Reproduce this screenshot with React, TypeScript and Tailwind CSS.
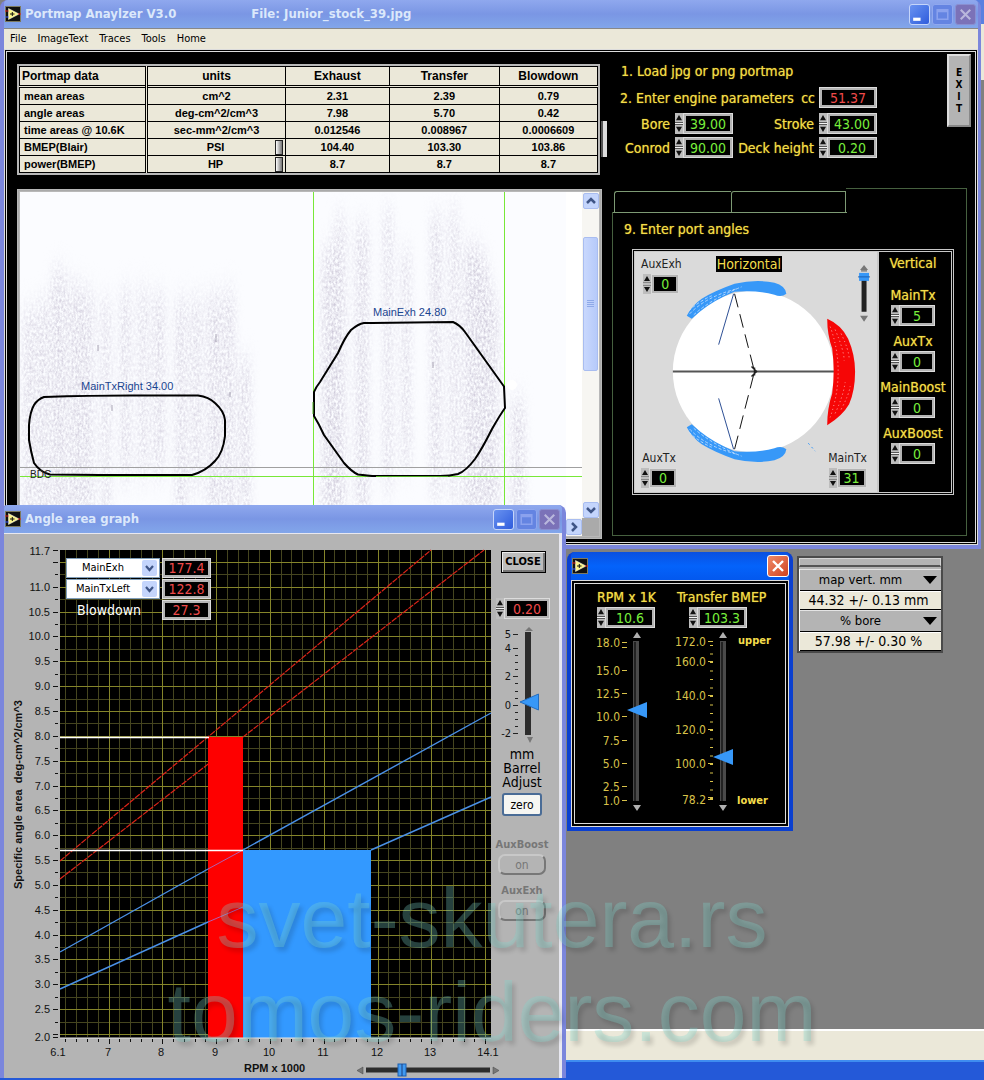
import React, { useId } from 'react';

const ui = "font-['DejaVu_Sans_Condensed','DejaVu_Sans',sans-serif]";
const dialog = "font-['Liberation_Sans',sans-serif]";

const portRows = [
  { name: 'mean areas', unit: 'cm^2', values: ['2.31', '2.39', '0.79'] },
  { name: 'angle areas', unit: 'deg-cm^2/cm^3', values: ['7.98', '5.70', '0.42'] },
  { name: 'time areas @ 10.6K', unit: 'sec-mm^2/cm^3', values: ['0.012546', '0.008967', '0.0006609'] },
  { name: 'BMEP(Blair)', unit: 'PSI', ring: true, values: ['104.40', '103.30', '103.86'] },
  { name: 'power(BMEP)', unit: 'HP', ring: true, values: ['8.7', '8.7', '8.7'] },
];

function AppIcon() {
  return (
    <svg width="16" height="16" viewBox="0 0 16 16" className="shrink-0">
      <rect width="16" height="16" fill="#111" />
      <rect x="0.500" y="0.500" width="15" height="15" fill="none" stroke="#e8e4b0" strokeDasharray="1 1" />
      <path d="M3.500 2.500L14 8L3.500 13.500Z" fill="#fbf48a" stroke="#fff" strokeWidth="0.500" />
      <path d="M5 8h4.500M7.300 6v4" stroke="#111" />
      <path d="M0 11h3.500" stroke="#3b5bff" />
      <path d="M0 5h3.500M13 8h3" stroke="#e02020" />
    </svg>
  );
}

function TitleBar({ title, file }: { title: string; file?: string }) {
  return (
    <header className="flex h-7 items-center gap-1 rounded-t bg-gradient-to-b from-[#8fa8ee] via-[#7a96e4] to-[#82a6ea] pl-px pr-0.5">
      <AppIcon />
      <h1 className={`${ui} text-[13px] font-bold leading-4 text-[#dbe8fb]`}>{title}</h1>
      {file && <span className={`${ui} ml-[71px] text-[13px] font-bold leading-4 text-[#dbe8fb]`}>{file}</span>}
      <div className="ml-auto flex gap-0.5">
        <button aria-label="Minimize" className="h-[21px] w-[21px] rounded-[3px] border border-[#c5d5fa] bg-gradient-to-br from-[#6a92f0] to-[#2f5bdc]">
          <svg viewBox="0 0 18 18"><path d="M3 13.500h7" stroke="#fff" strokeWidth="3" /></svg>
        </button>
        <button aria-label="Maximize" className="h-[21px] w-[21px] rounded-[3px] border border-[#90a8ee] bg-[#6484e2]">
          <svg viewBox="0 0 18 18"><path d="M4 4.500h10v9H4zM4 6h10" fill="none" stroke="#8ba2ee" strokeWidth="1.500" /></svg>
        </button>
        <button aria-label="Close window" className="h-[21px] w-[21px] rounded-[3px] border border-[#8a8fd0] bg-[#7b72b8]">
          <svg viewBox="0 0 18 18"><path d="M4.500 4.500l9 9M13.500 4.500l-9 9" stroke="#b9b7dc" strokeWidth="2" /></svg>
        </button>
      </div>
    </header>
  );
}

function Arrows() {
  return (
    <svg viewBox="0 0 8 20" className="h-full w-2 shrink-0 bg-[#bdbdbd]" preserveAspectRatio="none">
      <path d="M4 2L7 7H1ZM4 18L7 13H1Z" fill="#111" />
      <path d="M0 9h8M0 11h8" stroke="#555" />
      <path d="M0 10h8" stroke="#f4f4f4" />
    </svg>
  );
}

type NumBoxProps = { value: string; label?: string; id?: string; red?: boolean; arrows?: boolean; className?: string };

function NumBox({ value, label, id, red, arrows = true, className = 'h-[21px] w-[58px]' }: NumBoxProps) {
  return (
    <span className={`flex shrink-0 ${className}`}>
      {arrows && <Arrows />}
      <input
        id={id}
        aria-label={label}
        defaultValue={value}
        readOnly={!arrows}
        className={`${ui} min-w-0 flex-1 border-[3px] border-[#b4b4b4] bg-black text-center text-[14px] leading-4 outline-1 -outline-offset-1 outline-[#dcdcdc] ${red ? 'text-[#f04a4a]' : 'text-[#78ee3c]'}`}
      />
    </span>
  );
}

function Field({ label, value, labelClass, boxClass }: { label: string; value: string; labelClass: string; boxClass: string }) {
  const id = useId();
  return (
    <div className="flex flex-col items-center gap-[2px]">
      <label htmlFor={id} className={`${ui} ${labelClass}`}>{label}</label>
      <NumBox id={id} value={value} className={boxClass} />
    </div>
  );
}

function PortTable() {
  return (
    <div className="mt-3 border-2 border-[#b8b8b8] bg-[#b8b8b8]">
      <table className={`${dialog} w-full table-fixed border-collapse border border-black bg-[#ebe8d9] text-center text-[12px] font-bold leading-4 text-black`}>
        <colgroup>
          <col className="w-[22%]" /><col className="w-[24%]" /><col className="w-[18%]" /><col className="w-[19%]" /><col className="w-[17%]" />
        </colgroup>
        <thead>
          <tr className="h-5 border-b-[3px] border-double border-black">
            {['Portmap data', 'units', 'Exhaust', 'Transfer', 'Blowdown'].map((h, i) => (
              <th key={h} className={i === 0 ? 'border-r-[3px] border-double border-black pl-0.5 text-left' : 'border-r border-black'}>{h}</th>
            ))}
          </tr>
        </thead>
        <tbody className="text-[11px]">
          {portRows.map(r => (
            <tr key={r.name} className="h-[17px] border-b border-black">
              <th className="border-r-[3px] border-double border-black pl-1 text-left">{r.name}</th>
              <td className="border-r border-black">
                {r.ring ? (
                  <div className="flex items-center">
                    <select aria-label={`${r.name} unit`} className="h-4 min-w-0 flex-1 appearance-none pl-2 text-center [text-align-last:center]">
                      <option>{r.unit}</option>
                    </select>
                    <span className="mr-0.5 h-[15px] w-2 border border-[#222] bg-gradient-to-r from-white to-[#777]" />
                  </div>
                ) : r.unit}
              </td>
              {r.values.map((v, i) => <td key={i} className="border-r border-black">{v}</td>)}
            </tr>
          ))}
        </tbody>
      </table>
    </div>
  );
}

const smudges = [
  [24, 310, 10, 208], [38, 302, 10, 216], [52, 272, 14, 246], [70, 286, 12, 232], [84, 292, 9, 226],
  [102, 300, 8, 218], [121, 290, 9, 190], [139, 288, 8, 190], [154, 294, 10, 180], [176, 300, 10, 218],
  [192, 298, 9, 190], [208, 296, 12, 222], [224, 292, 10, 226], [240, 360, 10, 158],
  [322, 250, 14, 268], [335, 218, 10, 300], [356, 225, 12, 290], [384, 210, 8, 280], [402, 250, 8, 220],
  [431, 216, 10, 280], [450, 210, 8, 290], [464, 245, 12, 273], [477, 265, 12, 253], [490, 300, 8, 218], [512, 400, 12, 118],
  [474, 250, 10, 90], [484, 290, 9, 90], [490, 440, 9, 78],
];

function ArrowButton({ label, d }: { label: string; d: string }) {
  return (
    <button aria-label={label} className="h-4 w-4 shrink-0 rounded-[2px] border border-[#a9bdf0] bg-[#c4d5fc]">
      <svg viewBox="0 0 14 14"><path d={d} fill="none" stroke="#3f5586" strokeWidth="2.500" /></svg>
    </button>
  );
}

function PortImage() {
  return (
    <div className="mt-3.5 border-[3px] border-double border-[#b8b8b8] bg-[#aaa]">
      <div className="flex">
        <svg viewBox="20 192 562 326" className="min-w-0 flex-1 bg-[#fbfcff]">
          <defs>
            <filter id="soft" x="-20%" y="-20%" width="140%" height="140%"><feGaussianBlur stdDeviation="5 14" /></filter>
            <filter id="grain" x="0" y="0" width="100%" height="100%">
              <feTurbulence type="fractalNoise" baseFrequency="0.5 0.3" numOctaves="3" seed="4" />
              <feColorMatrix values="0 0 0 0 0.62  0 0 0 0 0.59  0 0 0 0 0.7  0 0 0 2 -0.62" />
            </filter>
            <mask id="streaks">
              <g filter="url(#soft)" fill="#fff">
                {smudges.map(([x, y, w, h], i) => <rect key={i} x={x} y={y} width={w} height={h} />)}
              </g>
            </mask>
          </defs>
          <rect x="20" y="192" width="562" height="326" filter="url(#grain)" mask="url(#streaks)" />
          <path d="M566 192h16v326h-16z" fill="#fff" />
          <circle cx="512" cy="385" r="5" fill="#fff" />
          <path d="M98 345v6M216 334v8M230 392v5M112 405v6M433 362v6" stroke="#8a8398" strokeOpacity="0.7" />
          <path d="M20 467.500H582" stroke="#a0a0a0" />
          <path d="M20 476.500H582M313.500 192V518M504.500 192V518" stroke="#78e838" />
          <path
            d="M44 397Q90 395.500 130 395.500H198Q209 397 215 403Q224 411 225 420V436Q223 453 215 461Q206 471 192 475H100L50 474.500Q40 472 34 463Q31 452 29 440V425Q30 412 34 405Q38 399 44 397Z"
            fill="none" stroke="#000" strokeWidth="2"
          />
          <path
            d="M314 392Q316 387 320 382L338 353Q345 337 351 330Q358 324 364 323H372L453 322Q460 325 465 332L504 386.500L505 408Q500 415 492 429Q482 449 475 459Q466 471 458 474Q450 476 440 476H372L358 474.500Q352 472 344 463L324 435Q319 424 314 416Z"
            fill="none" stroke="#000" strokeWidth="2"
          />
          <path d="M376 476.500H448M313 402v12" stroke="#4fae22" />
          <g className={dialog} fontSize="11" fill="#1a4590">
            <text x="81" y="390">MainTxRight 34.00</text>
            <text x="373" y="316">MainExh 24.80</text>
            <text x="30" y="478" fontSize="10" fill="#222">BDC</text>
          </g>
        </svg>
        <div className="flex w-[17px] flex-col items-center bg-[#f7f6f2] pt-px">
          <ArrowButton label="Scroll up" d="M3 9l4-4l4 4" />
          <div className="mt-7 flex h-[134px] w-[15px] items-center justify-center rounded-[2px] border border-[#a9bdf0] bg-gradient-to-r from-[#c9d8fd] to-[#b6cafa]">
            <svg width="7" height="8" viewBox="0 0 7 8"><path d="M0 .5h7M0 2.500h7M0 4.500h7M0 6.500h7" stroke="#8ea9e8" /></svg>
          </div>
          <div className="mt-auto flex"><ArrowButton label="Scroll down" d="M3 5l4 4l4-4" /></div>
        </div>
      </div>
      <div className="flex h-[18px] items-center justify-end bg-[#f7f6f2]">
        <ArrowButton label="Scroll right" d="M5 3l4 4l-4 4" />
        <span className="h-full w-[17px] bg-[#aaa]" />
      </div>
    </div>
  );
}

const yellow = 'text-[14px] leading-4 text-[#f3dd4c] [text-shadow:0_0_1px_#b9a010]';

function EngineParams() {
  return (
    <section className={`${ui} ${yellow} flex w-[274px] flex-col whitespace-nowrap pt-[11px]`}>
      <p className="pl-[18px]">1. Load jpg or png portmap</p>
      <div className="mt-2 flex items-center">
        <p className="flex-1 pl-[17px]">2. Enter engine parameters</p>
        <label htmlFor="cc" className="pr-1">cc</label>
        <NumBox id="cc" value="51.37" red arrows={false} />
      </div>
      <div className="mt-[5px] grid grid-cols-[67px_58px_1fr_58px] items-center gap-x-[5px] gap-y-[3px] text-right">
        <label htmlFor="bore">Bore</label>
        <NumBox id="bore" value="39.00" />
        <label htmlFor="stroke">Stroke</label>
        <NumBox id="stroke" value="43.00" />
        <label htmlFor="conrod">Conrod</label>
        <NumBox id="conrod" value="90.00" />
        <label htmlFor="deck">Deck height</label>
        <NumBox id="deck" value="0.20" />
      </div>
    </section>
  );
}

const arc = 'M687 317Q692 307 702 300Q715 292 735 285Q757 280 775 284Q786 287 787 295Q782 299 775 296Q757 291 735 293Q715 301 700 313L692 320Z';

function TransferSide() {
  return (
    <>
      <path d={arc} fill="#3798f8" />
      <path d="M690 315Q706 298 737 290M694 316Q712 300 742 288M689 312Q700 302 712 297" fill="none" stroke="#cfe6ff" strokeDasharray="3 2" strokeWidth="0.800" />
      <path d="M734 295L719 346" stroke="#2c4f94" />
      <path d="M735 295L755 373" stroke="#111" strokeDasharray="14 7" />
    </>
  );
}

function PortDial() {
  return (
    <svg viewBox="635 253 243 241" className="col-start-1 row-start-1 h-full w-full">
      <circle cx="754" cy="373" r="81" fill="#fff" />
      <path d="M673 373H836" stroke="#555" strokeWidth="2" />
      <TransferSide />
      <g transform="matrix(1 0 0 -1 0 746)"><TransferSide /></g>
      <path d="M752 368l5 5l-5 5M755 369v8" fill="none" stroke="#222" strokeWidth="1.500" />
      <path d="M828 320Q842 326 849 340Q856 356 856 373Q856 392 850 406Q843 418 828 427Q828 410 833 395Q836 373 833 350Q828 336 828 320Z" fill="#f60606" />
      <path d="M831 328Q839 350 839 373Q839 396 831 419M836 331Q845 352 845 362M836 415Q844 398 846 384M842 335Q850 352 850 360M842 411Q850 396 851 388" fill="none" stroke="#ffb0b0" strokeDasharray="1 3" />
      <path d="M809 445l7 8" stroke="#3798f8" strokeDasharray="2 3" />
      <path d="M865 266l4 5h-8zM865 323l4-6h-8z" fill="#777" />
      <path d="M865 275V313" stroke="#222" strokeWidth="5" />
      <path d="M862 272h6" stroke="#555" />
      <path d="M860 274h10v8h-10z" fill="#3798f8" />
      <path d="M859 278h12" stroke="#1c5fb0" />
    </svg>
  );
}

function PortAngles() {
  const dark = 'text-[12px] leading-4 text-[#222]';
  return (
    <section className="mt-[30px] ml-2 mr-2">
      <div className="flex items-end" role="tablist">
        <button role="tab" aria-label="Tab 1" className="ml-0.5 h-[21px] w-[117px] rounded-tl-[3px] border-l border-t border-[#7d9a74]" />
        <button role="tab" aria-label="Tab 2" className="h-[21px] w-[115px] rounded-tl-[3px] border-x border-t border-[#7d9a74]" />
        <button role="tab" aria-label="Tab 3" aria-selected className="h-6 flex-1 border-r border-t border-[#46603f]" />
      </div>
      <div className="relative border-x border-b border-[#46603f] pb-10 pl-[19px] pr-3 pt-[9px] before:absolute before:left-0 before:top-0 before:h-px before:w-[234px] before:bg-[#7d9a74]">
        <h2 className={`${ui} ${yellow} -ml-2`}>9. Enter port angles</h2>
        <div className="mt-3 flex border-[3px] border-double border-[#c8c8c8]">
          <div className="grid min-w-0 flex-1 bg-[#dadada]">
            <PortDial />
            <div className="z-10 col-start-1 row-start-1 flex flex-col justify-between py-1 pl-1.5 pr-2.5">
              <div className="flex items-start">
                <Field label="AuxExh" value="0" labelClass={dark} boxClass="w-9 h-5" />
                <h3 className={`${ui} ml-[34px] bg-black px-px text-[14px] leading-4 text-[#f3dd4c]`}>Horizontal</h3>
              </div>
              <div className="flex justify-between">
                <Field label="AuxTx" value="0" labelClass={dark} boxClass="w-9 h-5" />
                <Field label="MainTx" value="31" labelClass={dark} boxClass="w-[38px] h-5" />
              </div>
            </div>
          </div>
          <div className="flex w-[74px] flex-col items-center gap-[7px] border-l-2 border-[#c8c8c8] bg-black pb-7 pr-1 pt-[3px]">
            <h3 className={`${ui} ${yellow} mb-[9px]`}>Vertical</h3>
            <Field label="MainTx" value="5" labelClass={yellow} boxClass="w-11 h-[21px]" />
            <Field label="AuxTx" value="0" labelClass={yellow} boxClass="w-11 h-[21px]" />
            <Field label="MainBoost" value="0" labelClass={yellow} boxClass="w-11 h-[21px]" />
            <Field label="AuxBoost" value="0" labelClass={yellow} boxClass="w-11 h-[21px]" />
          </div>
        </div>
      </div>
    </section>
  );
}

function MainWindow() {
  return (
    <main className="mr-[3px] rounded-t-lg border-b-4 border-l-4 border-r-[3px] border-[#7b86dc] bg-[#7b86dc]">
      <TitleBar title="Portmap Anaylzer V3.0" file="File: Junior_stock_39.jpg" />
      <nav className={`${ui} flex h-[21px] items-center gap-[11px] border-t border-[#888] bg-[#ebe8d9] pl-1.5 text-[11px] leading-4 text-black`}>
        {['File', 'ImageText', 'Traces', 'Tools', 'Home'].map(m => <button key={m}>{m}</button>)}
      </nav>
      <div className="border-[3px] border-double border-[#dcdcdc] bg-black">
        <div className="flex pb-[3px] pl-2.5">
          <div className="w-[587px] shrink-0 pr-0.5">
            <div className="mr-0.5"><PortTable /></div>
            <PortImage />
          </div>
          <div className="min-w-0 flex-1">
            <div className="flex justify-between">
              <div className="flex">
                <span className="-ml-[3px] mt-[69px] h-9 w-1.5 border-l-2 border-[#555] bg-[#ddd]" />
                <div className="-ml-1"><EngineParams /></div>
              </div>
              <button className={`${ui} mr-1 mt-0.5 flex h-[73px] w-6 flex-col items-center justify-center border-2 border-b-[#888] border-l-[#ddd] border-r-[#888] border-t-[#ddd] bg-[#b4b4b4] text-[10px] font-bold leading-3 text-black`}>
                <span>E</span><span>X</span><span>I</span><span>T</span>
              </button>
            </div>
            <PortAngles />
          </div>
        </div>
      </div>
    </main>
  );
}

// Plot area runs from 60,550 to 491,1037 in window units
const px = (rpm: number) => Math.round(108.5 + (rpm - 7) * 53.8);
const py = (v: number) => Math.round(1034 - (v - 2) * 49.7);

const yMajor = Array.from({ length: 20 }, (_, i) => 2 + i * 0.5);
const yMinor = Array.from({ length: 19 }, (_, i) => 2.25 + i * 0.5);
const xMinor = Array.from({ length: 40 }, (_, i) => 6.2 + i * 0.2);
const xMajor = [7, 8, 9, 10, 11, 12, 13, 14];

function AngleChart() {
  return (
    <svg viewBox="4 534 489 544" className="w-full overflow-visible">
      <rect x="60" y="550" width="431" height="488" fill="#000" />
      <g stroke="#45451f" strokeWidth="1">
        {yMinor.map(v => <path key={v} d={`M60 ${py(v) + 0.5}H491`} />)}
        {xMinor.map(v => <path key={v} d={`M${px(v) + 0.5} 550V1037`} />)}
      </g>
      <g stroke="#85852a">
        {yMajor.map(v => <path key={v} d={`M60 ${py(v) + 0.5}H491`} />)}
        {xMajor.map(v => <path key={v} d={`M${px(v) + 0.5} 550V1037`} />)}
      </g>
      <path d="M60 861L431 550M60 879L484 550" stroke="#dd2418" strokeWidth="1.200" strokeDasharray="6 1" />
      <rect x="208" y="737" width="35" height="301" fill="#fe0000" />
      <path d="M60 952L208 869M60 989L208 922" stroke="#4a90e6" strokeWidth="1.400" />
      <path d="M208 869L243 850M208 922L243 907" stroke="#b060b0" />
      <rect x="243" y="850" width="128" height="188" fill="#3399ff" />
      <path d="M243 850L491 713M371 850L491 797" stroke="#4a90e6" strokeWidth="1.400" />
      <path d="M60 737.500H209M60 850.500H243" stroke="#fff" strokeWidth="1.500" />
      <path d="M60 1038H491" stroke="#e4e4e4" />
      <g stroke="#111">
        {yMinor.map(v => <path key={v} d={`M55 ${py(v) + 0.5}h3`} />)}
        {yMajor.map(v => <path key={v} d={`M53 ${py(v) + 0.5}h5`} />)}
        {xMinor.map(v => <path key={v} d={`M${px(v) + 0.5} 1039v3`} />)}
        {xMajor.map(v => <path key={v} d={`M${px(v) + 0.5} 1039v5`} />)}
        <path d="M53 550.500h5M53 1037.500h5" />
      </g>
      <g className={dialog} fontSize="11" fill="#111">
        <g textAnchor="end">
          <text x="50" y="555">11.7</text>
          {yMajor.slice(1, -1).map(v => <text key={v} x="50" y={py(v) + 4}>{v.toFixed(1)}</text>)}
          <text x="50" y="1041">2.0</text>
        </g>
        <g textAnchor="middle">
          <text x="58" y="1056">6.1</text>
          {xMajor.slice(0, -1).map(v => <text key={v} x={px(v) - 1} y="1056">{v}</text>)}
          <text x="488" y="1056">14.1</text>
        </g>
        <g fontWeight="bold">
          <text x="244" y="1072">RPM x 1000</text>
          <text transform="translate(22 889) rotate(-90)" xmlSpace="preserve">Specific angle area  deg-cm^2/cm^3</text>
        </g>
      </g>
      <path d="M366 1070H490" stroke="#2c2c2c" strokeWidth="5" />
      <path d="M363 1067v7l-6-3.500zM493 1067v7l6-3.500z" fill="#777" stroke="#444" strokeWidth="0.500" />
      <rect x="398" y="1064" width="8" height="12" fill="#3f9af2" stroke="#1f5fae" />
      <path d="M402 1064v12" stroke="#1f3f7e" />
    </svg>
  );
}

function Combo({ label, value }: { label: string; value: string }) {
  return (
    <span className="relative block h-5 w-[94px] border border-[#7f9db9] bg-white">
      <select aria-label={label} className={`${ui} block h-full w-full appearance-none pl-1 pr-6 text-center text-[11px] leading-4 text-black [text-align-last:center]`}>
        <option>{value}</option>
      </select>
      <svg viewBox="0 0 15 15" className="pointer-events-none absolute right-0.5 top-px h-4 w-[15px] rounded-[2px] bg-[#c4d5fc]">
        <path d="M4 5.500l3.500 4l3.500-4" fill="none" stroke="#3f5586" strokeWidth="2.200" />
      </svg>
    </span>
  );
}

function BarrelSlider() {
  return (
    <div className="relative mt-1 w-full">
      <svg viewBox="493 622 66 122" className="w-full">
        <path d="M529 626l4 4h-8zM530 742l3-6h-6z" fill="#777" />
        <path d="M528 631V734" stroke="#2c2c2c" strokeWidth="6" />
        <path d="M513 633.500h5M513 647.500h5M513 675.500h5M513 704.500h5M513 732.500h5M515 654.500h3M515 661.500h3M515 668.500h3M515 682.500h3M515 690.500h3M515 697.500h3M515 711.500h3M515 718.500h3M515 725.500h3" stroke="#222" />
        <g className={ui} fontSize="11" fill="#111" textAnchor="end">
          <text x="511" y="637">5</text>
          <text x="511" y="651">4</text>
          <text x="511" y="679">2</text>
          <text x="511" y="708">0</text>
          <text x="511" y="736">-2</text>
        </g>
        <path d="M520 701L538.500 693V709Z" fill="#3798f8" stroke="#246ec0" />
      </svg>
      <input type="range" aria-label="Barrel adjust" min={-2} max={5} step={0.1} defaultValue={0.2} className="absolute inset-0 h-full w-full opacity-0" />
    </div>
  );
}

function ToggleField({ label }: { label: string }) {
  return (
    <div className={`${ui} flex flex-col items-center gap-px text-[12px] leading-4 text-[#777]`}>
      <p className="text-[11px] font-bold">{label}</p>
      <button aria-label={label} className="h-[21px] w-12 rounded-[7px] border-2 border-b-[#777] border-l-[#c8c8c8] border-r-[#777] border-t-[#c8c8c8]">on</button>
    </div>
  );
}

function GraphWindow() {
  return (
    <section className="absolute left-0 top-[505px] w-[566px] rounded-t-lg border-x-4 border-[#7b86dc] bg-[#7b86dc]">
      <TitleBar title="Angle area graph" />
      <div className="flex border-r-[3px] border-t border-[#e8e8f0] bg-[#b4b4b4]">
        <div className="relative w-[489px] shrink-0">
          <AngleChart />
          <div className="absolute left-[62px] top-6 grid grid-cols-[94px_49px] gap-x-0.5 gap-y-px">
            <Combo label="Upper port" value="MainExh" />
            <NumBox label="Upper angle" value="177.4" red arrows={false} className="w-[49px] h-5" />
            <Combo label="Lower port" value="MainTxLeft" />
            <NumBox label="Lower angle" value="122.8" red arrows={false} className="w-[49px] h-5" />
            <label htmlFor="blow" className={`${ui} pr-2 text-center text-[14px] leading-5 text-white`}>Blowdown</label>
            <NumBox id="blow" value="27.3" red arrows={false} className="w-[49px] h-5" />
          </div>
        </div>
        <div className={`${ui} min-w-0 flex-1 pt-[17px] text-[14px] leading-[14px] text-black`}>
          <div className="flex flex-col items-center pr-1.5">
            <button className="h-[22px] w-[45px] border border-black bg-[#bdbdbd] text-[11px] font-bold leading-4 shadow-[inset_1px_1px_0_#eee,inset_-2px_-2px_0_#777]">CLOSE</button>
            <div className="mt-[25px]"><NumBox label="Barrel" value="0.20" red className="h-[21px] w-[54px]" /></div>
          </div>
          <BarrelSlider />
          <div className="flex flex-col items-center pr-2">
            <p className="mt-0.5 text-center">mm<br />Barrel<br />Adjust</p>
            <button className="mb-[21px] mt-1 h-[23px] w-10 rounded-[3px] border-2 border-[#4a6c96] bg-[#f6f6f2] text-[12px] leading-4">zero</button>
            <ToggleField label="AuxBoost" />
            <div className="mt-2"><ToggleField label="AuxExh" /></div>
          </div>
        </div>
      </div>
    </section>
  );
}

const rpmScale: [string, number][] = [['18.0', 644], ['15.0', 672], ['12.5', 695], ['10.0', 718], ['7.5', 742], ['5.0', 765], ['2.5', 788], ['1.0', 802]];
const bmepScale: [string, number][] = [['172.0', 643], ['160.0', 663], ['140.0', 697], ['120.0', 731], ['100.0', 765], ['78.2', 801]];

function BmepWindow() {
  return (
    <section className="absolute left-[567px] top-[552px] w-[226px] rounded-t-lg border-x-4 border-b-4 border-[#0a3fd0] bg-[#0a3fd0]">
      <header className="flex h-7 items-center justify-between rounded-t bg-gradient-to-b from-[#0a50e0] via-[#0463fb] to-[#0358ee] pl-px">
        <AppIcon />
        <button aria-label="Close" className="h-[22px] w-[22px] rounded-[3px] border border-white bg-gradient-to-br from-[#ee8a68] to-[#d0401c]">
          <svg viewBox="0 0 20 20"><path d="M5 5l10 10M15 5l-10 10" stroke="#fff" strokeWidth="2.400" /></svg>
        </button>
      </header>
      <div className="border-4 border-double border-[#dcdcdc] bg-black">
        <div className={`${ui} ${yellow} flex gap-[21px] pl-[22px] pt-[5px]`}>
          <div className="flex flex-col gap-0.5">
            <label htmlFor="rpm">RPM x 1K</label>
            <NumBox id="rpm" value="10.6" />
          </div>
          <div className="flex flex-col items-start gap-0.5 whitespace-nowrap">
            <label htmlFor="bmep">Transfer BMEP</label>
            <NumBox id="bmep" value="103.3" className="ml-3 h-[21px] w-[58px]" />
          </div>
        </div>
        <div className="relative pt-px">
          <svg viewBox="575 630 210 194" className="w-full">
            <g className={ui} fontSize="12" fill="#d8c24a" textAnchor="end">
              {rpmScale.map(([t, y]) => <text key={t} x="620" y={y + 4}>{t}</text>)}
              {bmepScale.map(([t, y]) => <text key={t} x="706" y={y + 4}>{t}</text>)}
            </g>
            <g stroke="#d8c24a">
              {rpmScale.map(([t, y]) => <path key={t} d={`M622 ${y - 0.5}h5`} />)}
              {bmepScale.map(([t, y]) => <path key={t} d={`M708 ${y - 0.5}h5`} />)}
              {Array.from({ length: 19 }, (_, i) => <path key={i} d={`M710 ${646.5 + i * 8.5}h3`} />)}
              <path d="M622 648.500h5M708 798.500h5" />
            </g>
            <path d="M636 642V802M723 642V802" stroke="#4a4a4a" strokeWidth="6" />
            <path d="M635 643V802M722 643V802" stroke="#222" strokeWidth="2" />
            <path d="M637 633l4 6h-8zM637 812l4-6h-8zM723 633l4 6h-8zM723 812l4-6h-8z" fill="#b0b0b0" />
            <path d="M627 711L647 703V719Z M713 758L733 750V766Z" fill="#3798f8" />
            <g className={ui} fontSize="11" fontWeight="bold" fill="#f3dd4c">
              <text x="738" y="645">upper</text>
              <text x="737" y="805">lower</text>
            </g>
          </svg>
          <input type="range" aria-label="RPM x 1K slider" min={1} max={18} step={0.1} defaultValue={10.6} className="absolute inset-y-0 left-[50px] w-6 opacity-0" />
          <input type="range" aria-label="Transfer BMEP slider" min={78.2} max={172} step={0.1} defaultValue={103.3} className="absolute inset-y-0 left-[136px] w-6 opacity-0" />
        </div>
      </div>
    </section>
  );
}

function Palette() {
  return (
    <section className={`${ui} absolute left-[797px] top-[556px] w-[146px] border-2 border-[#4a4a4a] bg-[#b4b4b4] text-center text-[14px] leading-[18px] text-black`}>
      <div className="mb-0.5 h-[9px] border border-b-2 border-[#d4d4d4] border-b-[#555]" />
      {[
        { id: 'map', label: 'map vert. mm', value: '44.32 +/- 0.13 mm' },
        { id: 'bore', label: '% bore', value: '57.98 +/- 0.30 %' },
      ].map(r => (
        <div key={r.id} className="border-l border-white">
          <div className="relative border-t border-t-[#e4e4e4]">
            <select aria-label={r.id} className="block h-5 w-full appearance-none pl-1 pr-6 text-center text-[13px] [text-align-last:center]">
              <option>{r.label}</option>
            </select>
            <svg viewBox="0 0 14 8" className="pointer-events-none absolute right-1 top-1.5 w-3.5"><path d="M0 0h14L7 8Z" fill="#000" /></svg>
          </div>
          <p className="border-y border-black bg-[#ebe8d9] pr-1 shadow-[inset_0_1px_0_#fff]">{r.value}</p>
        </div>
      ))}
    </section>
  );
}

export default function App() {
  return (
    <div className="relative h-screen overflow-hidden bg-[#808080]">
      <div className="absolute right-0 top-0 h-20 w-4 border-t-[24px] border-[#5a80e0] bg-[#ebe8d9]" />
      <footer className="absolute inset-x-0 bottom-0">
        <div className="h-[31px] border-t-2 border-white bg-[#ebe8d9]" />
        <div className="h-5 border-t-2 border-[#3f8cf0] bg-[#2459d8]" />
      </footer>
      <div className="relative"><MainWindow /></div>
      <BmepWindow />
      <Palette />
      <GraphWindow />
      <div className={`${dialog} pointer-events-none absolute inset-x-0 top-[871px] flex flex-col items-center whitespace-nowrap text-[84px] leading-[94px] text-[rgba(125,215,205,0.3)] [text-shadow:3px_4px_4px_rgba(0,0,0,0.14)]`}>
        <span>svet-skutera.rs</span>
        <span>tomos-riders.com</span>
      </div>
    </div>
  );
}
